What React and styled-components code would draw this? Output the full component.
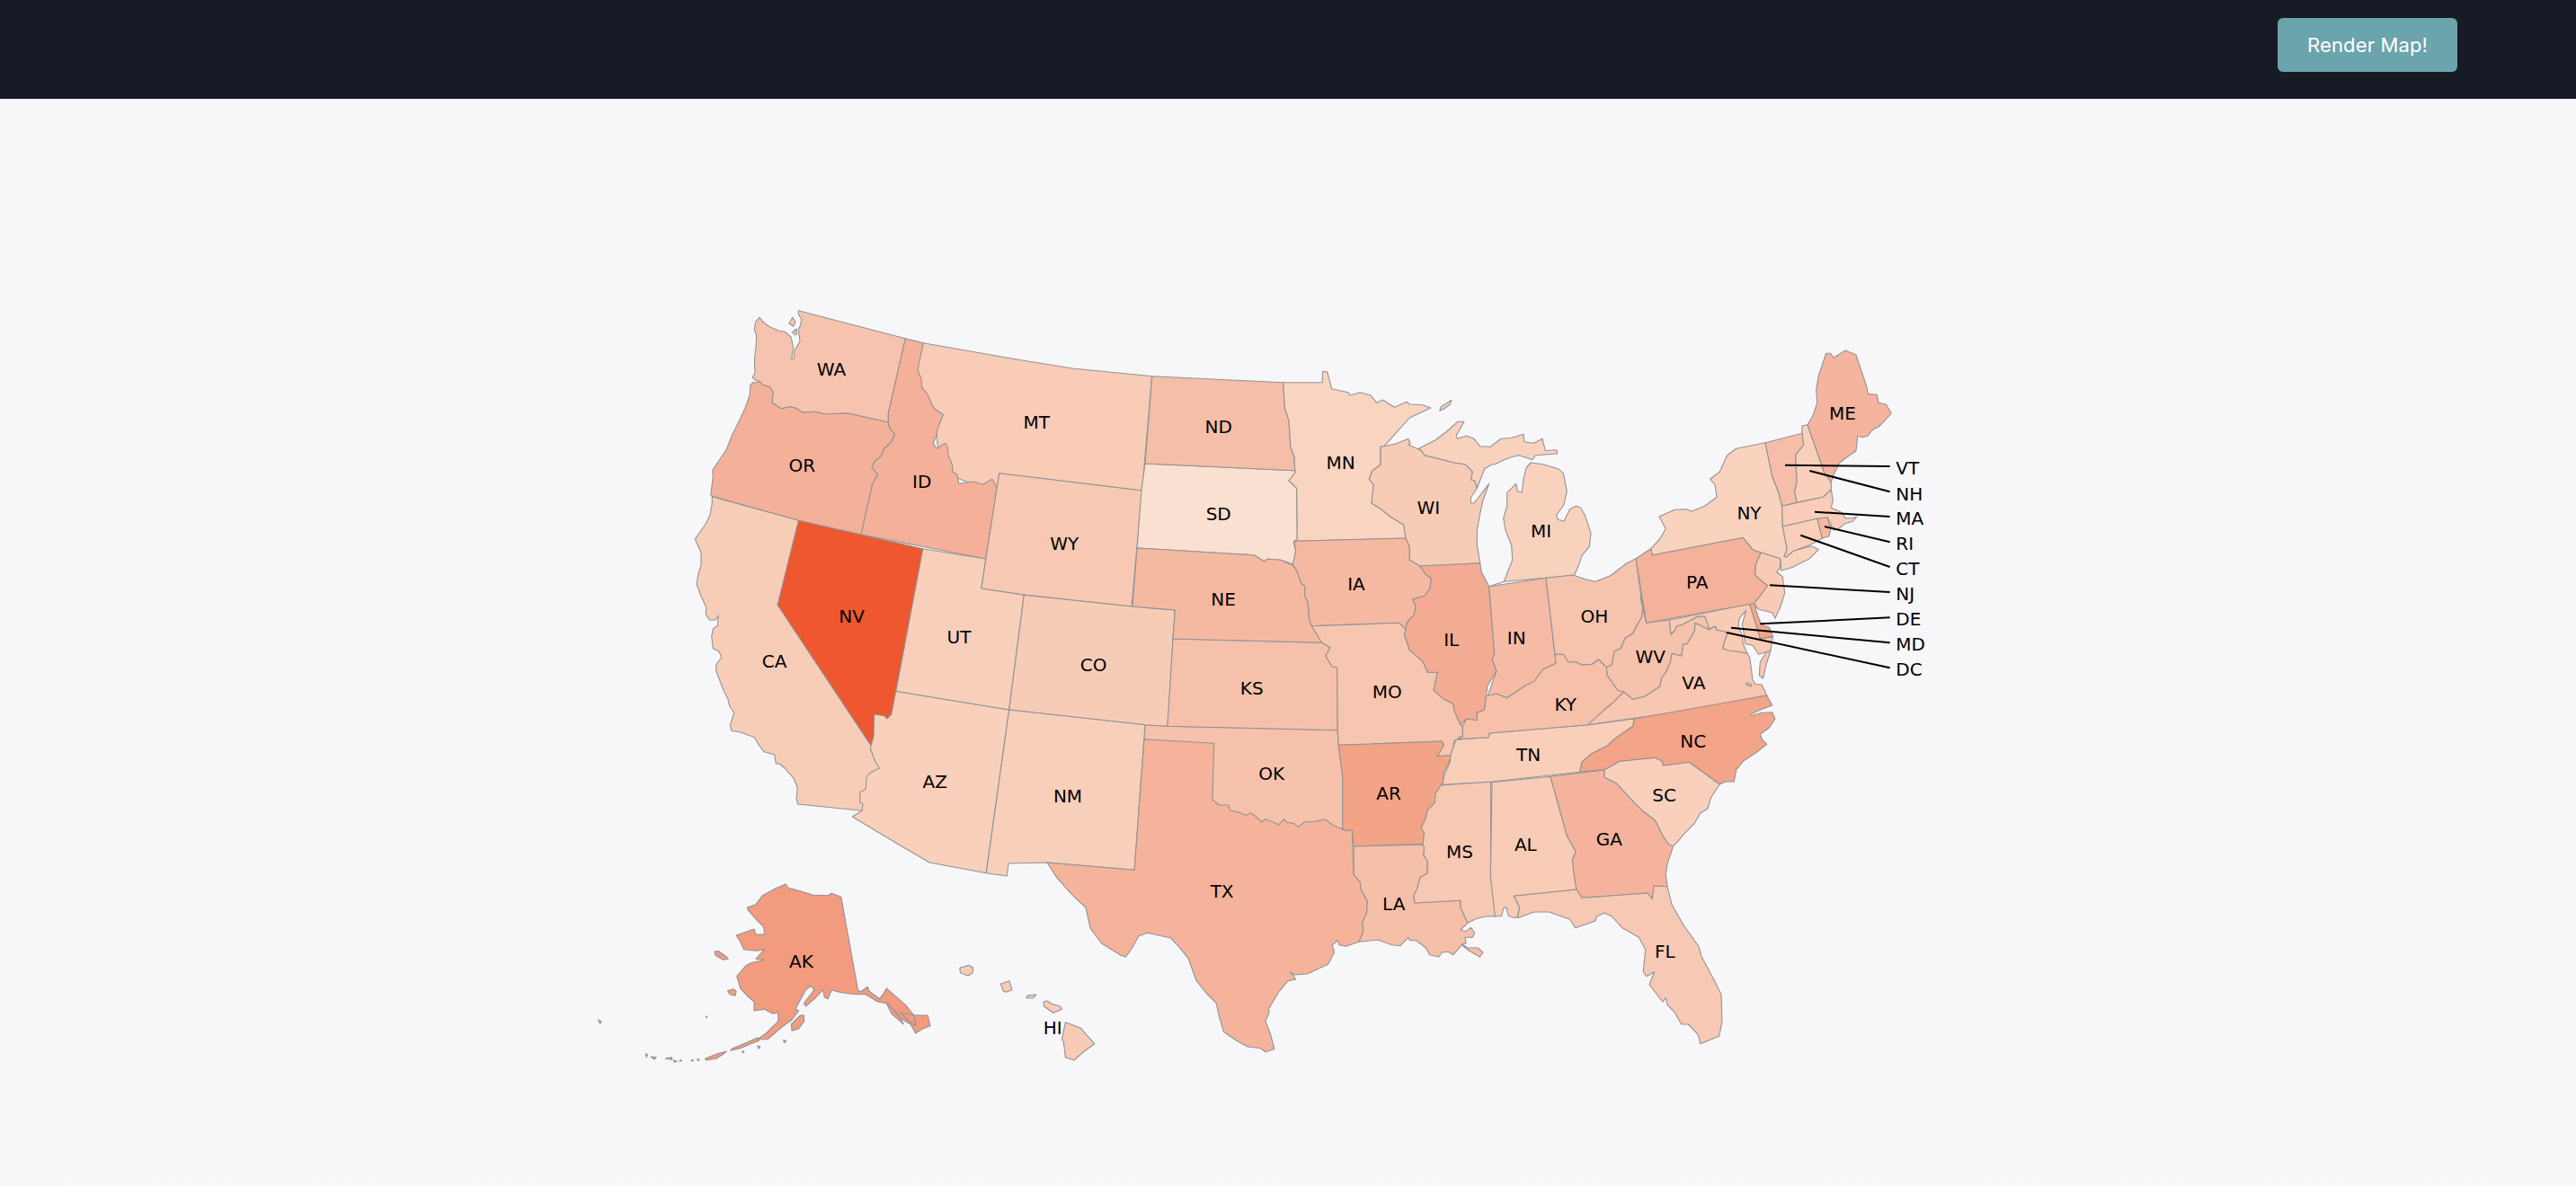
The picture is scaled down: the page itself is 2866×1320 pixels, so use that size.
import React from 'react';
import styled, { createGlobalStyle } from 'styled-components';

const GlobalStyle = createGlobalStyle`
    html, body {
        margin: 0;
        padding: 0;
        background: #f7f7fa;
    }
`;

// traced points are noted per region of the page, then moved to page coordinates
const region = (ox, oy, sx = 3) => (s) =>
    s
        .trim()
        .split(/\s+/)
        .map((p) => {
            const [x, y] = p.split(',').map(Number);
            return `${(ox + x / sx).toFixed(1)},${(oy + y / 3).toFixed(1)}`;
        })
        .join(' ');

const A = region(760, 330);
const B = region(760, 540);
const C = region(1260, 380);
const D = region(1700, 370);
const E = region(1800, 620);
const F = region(1140, 780, 2.8);
const G = region(1600, 740);
const H = region(640, 960, 1568 / 600);

const shapes = [
    // these three lie partly under their neighbours
    ['MT', '#f8ccb7', A('802,155 1100,208 1300,240 1565,266 1532,648 1055,590 1048,638 1000,640 900,600 850,500 840,400 770,240')],
    ['AZ', '#f8d0bb', [B('710,688 1088,750 1025,1200'), H('1195,35 1030,0'), B('720,1200 565,1107 597,1087 585,1050 600,960 610,860 600,760 680,700')].join(' ')],
    ['OK', '#f6c2ab', F('375,80 445,85 975,98 978,150 990,250 990,425 960,440 850,450 600,380 590,360 570,320 575,150 372,128')],

    ['WA', '#f6c4ae', A('385,47 742,140 685,390 685,420 550,390 470,392 440,385 400,388 375,372 355,368 328,375 297,355 300,320 290,302 265,295 258,285 240,278 232,270 240,255 238,210 243,170 245,130 238,110 242,85 255,70 270,88 290,102 320,115 340,118 360,135 368,170 362,208 370,208 372,180 390,150 385,110 392,95 395,75 385,60')],
    ['WA', '#f6c4ae', A('354,90 365,70 375,85 368,100')],
    ['WA', '#f6c4ae', A('365,120 378,108 380,125 372,128')],
    ['OR', '#f4b199', A('232,288 258,285 265,295 290,302 300,320 297,355 328,375 355,368 375,372 400,388 440,385 470,392 550,390 685,420 690,440 707,460 695,485 670,510 660,535 640,550 630,570 650,595 632,625 594,795 385,748 92,665 100,600 98,580 125,540 145,510 165,460 190,410 210,365 222,330 225,295')],
    ['ID', '#f4b099', A('742,140 802,155 783,245 795,275 797,305 815,325 835,370 868,395 850,440 845,465 835,490 847,508 875,490 882,500 885,530 898,560 900,585 915,595 920,625 970,618 1000,628 1032,610 1048,638 1010,876 594,795 632,625 650,595 630,570 640,550 660,535 670,510 695,485 707,460 690,440 685,420 685,390')],
    ['WY', '#f7c9b4', A('1055,590 1532,648 1497,1035 1138,996 995,975')],
    ['UT', '#f8cfbb', B('800,212 1010,246 995,345 1138,367 1088,750 710,688')],
    ['CO', '#f7ccb7', [B('1138,367 1497,405'), C('0,885 142,897 135,993 123,1200'), F('445,85 375,80'), B('1088,750')].join(' ')],
    ['NM', '#f8cfbb', [B('1088,750'), F('375,80 372,128 342,565 70,540'), H('1260,3 1255,45 1195,35'), B('1025,1200')].join(' ')],
    ['NV', '#ee5730', B('385,118 800,212 710,688 695,765 680,780 672,770 638,765 636,840 627,870 315,400')],
    ['CA', '#f8cdb8', B('97,38 385,118 315,400 627,870 625,880 640,920 655,945 625,960 612,975 610,1015 590,1025 590,1058 600,1065 597,1087 383,1065 378,1048 382,1010 370,980 340,945 322,930 310,930 305,900 270,890 255,870 238,842 195,826 162,820 157,802 170,760 155,738 150,715 135,685 110,620 110,600 128,575 120,555 100,545 95,505 100,480 115,470 118,435 108,450 88,450 75,430 78,410 60,370 45,330 50,300 60,265 60,225 40,180 75,130 90,100 97,60')],
    ['TX', '#f5b39c', F('372,128 590,142 585,330 605,348 635,348 640,365 665,372 690,382 705,375 722,388 738,405 750,395 782,408 790,415 808,395 815,405 840,410 853,422 870,405 905,403 935,395 960,415 995,432 1020,432 1025,580 1045,605 1048,630 1068,670 1065,710 1052,740 1055,770 1042,805 1000,820 980,815 975,800 958,815 965,840 945,880 880,912 840,915 828,905 845,930 820,935 790,975 760,1030 762,1040 750,1070 765,1110 778,1163 750,1172 735,1160 695,1155 660,1135 620,1105 605,1050 597,1010 565,975 535,935 510,860 480,820 455,792 382,775 355,785 335,825 315,855 300,850 240,810 205,760 190,690 150,650 100,590 70,540 342,565')],
    ['KS', '#f6c1aa', [C('135,993 632,1006 660,1022 645,1050 665,1085 683,1090'), F('975,98 445,85')].join(' ')],
    ['SD', '#fae0d0', C('42,408 542,431 545,435 522,465 548,490 550,660 538,670 545,700 538,745 495,730 450,727 440,735 405,713 15,690 30,495')],
    ['ND', '#f5bea8', C('65,116 503,137 508,220 522,265 528,355 540,385 542,431 42,408')],
    ['NE', '#f5b9a2', C('15,690 405,713 440,735 450,727 495,730 535,748 548,765 565,810 575,815 575,850 585,870 590,930 598,950 632,1006 135,993 142,897 0,885')],
    ['MN', '#f9d5c1', C('503,137 633,137 635,100 650,102 665,158 720,170 725,180 760,170 795,180 815,205 835,195 862,212 875,220 915,202 925,210 970,212 995,222 925,255 880,305 840,350 828,352 828,412 800,432 790,460 805,478 798,540 830,560 860,585 905,612 912,657 540,667 550,660 548,490 522,465 545,435 542,431 540,385 528,355 522,265 508,220')],
    ['IA', '#f5b9a2', C('540,667 912,657 925,685 925,730 960,750 980,780 997,790 993,825 975,850 935,860 945,885 940,912 915,940 912,962 890,940 598,950 590,930 585,870 575,850 575,815 565,810 548,765 535,745 545,700')],
    ['WI', '#f7ccb6', C('840,350 885,340 920,325 928,340 920,345 950,358 965,365 975,380 1075,405 1110,410 1135,435 1130,462 1142,465 1150,490 1130,520 1128,540 1140,540 1190,475 1170,530 1160,575 1150,630 1150,680 1160,740 960,750 925,730 925,685 912,657 905,612 860,585 830,560 798,540 805,478 790,460 800,432 828,412 828,352')],
    ['MI', '#f9d2bd', C('1190,818 1240,802 1380,790 1475,780 1490,745 1500,715 1525,685 1530,640 1510,580 1495,555 1480,550 1460,560 1440,600 1420,595 1415,580 1440,545 1450,500 1438,440 1420,425 1370,410 1330,405 1315,420 1305,460 1300,505 1285,500 1280,475 1250,505 1250,550 1238,590 1245,630 1265,680 1268,730 1240,802')],
    ['MI', '#f9d2bd', C('955,358 1010,330 1050,300 1085,268 1107,268 1080,315 1085,325 1115,315 1140,325 1160,350 1195,352 1230,325 1265,322 1305,310 1308,335 1340,340 1368,325 1378,365 1415,362 1418,375 1345,380 1335,395 1290,380 1270,385 1240,395 1210,410 1200,410 1175,425 1150,490 1142,465 1130,462 1135,435 1110,410 1075,405 975,380 965,365')],
    ['MI', '#f9d2bd', C('1025,232 1030,218 1065,196 1060,210 1040,225')],
    ['MO', '#f7c6b0', [C('598,950 890,940 912,962 908,980 925,1030 970,1070 985,1105 1018,1105 1005,1165'), G('20,115 50,130 55,155 75,200 82,205 82,240 70,240 65,250 55,252'), F('1330,182 1285,185 1305,148 1300,135 978,148 975,98'), C('683,1090 665,1085 645,1050 660,1022 632,1006')].join(' ')],
    ['IL', '#f3ab93', [C('960,750 1160,740 1165,770 1190,818 1208,1045 1200,1060 1215,1100 1185,1150'), G('160,105 155,150 130,160 130,185 95,180 75,200 55,155 50,130 20,115'), C('1005,1165 1018,1105 985,1105 970,1070 925,1030 908,980 915,940 940,912 945,885 935,860 975,850 993,825 997,790 980,780')].join(' ')],
    ['IN', '#f5bba5', [C('1190,818 1380,790 1410,1045 1413,1075 1370,1095 1345,1135 1310,1160'), G('290,70 260,90 230,110 195,97 165,105'), C('1215,1100 1200,1060 1208,1045')].join(' ')],
    ['OH', '#f6c3ad', D('60,820 150,810 195,825 225,832 275,812 330,770 360,755 378,885 385,905 380,950 365,975 350,1005 325,1020 310,1055 288,1065 280,1110 262,1118 235,1092 215,1108 180,1110 160,1100 135,1100 118,1075 90,1075')],
    ['AR', '#f4a486', F('978,148 1300,135 1305,150 1285,185 1330,182 1320,210 1305,240 1305,270 1297,282 1280,310 1278,340 1255,365 1250,390 1235,425 1245,440 1240,478 1025,486 1020,432 995,432 990,425 990,250')],
    ['LA', '#f6bfa8', F('1025,486 1240,480 1245,490 1243,515 1255,535 1255,575 1232,590 1222,630 1212,650 1215,675 1358,667 1358,690 1380,742 1358,765 1375,770 1390,757 1402,775 1395,790 1372,790 1375,810 1362,812 1380,825 1412,825 1428,840 1418,855 1385,835 1362,815 1345,835 1335,848 1320,838 1300,840 1290,855 1262,848 1250,825 1220,800 1200,800 1195,790 1170,818 1145,815 1100,798 1042,805 1055,770 1052,740 1065,710 1068,670 1048,630 1045,605 1025,580')],
    ['MS', '#f7c8b2', F('1297,282 1452,270 1452,580 1467,720 1435,720 1405,728 1380,742 1358,690 1358,667 1215,675 1212,650 1222,630 1232,590 1255,575 1255,535 1243,515 1245,490 1240,478 1245,440 1235,425 1250,390 1255,365 1278,340 1280,310')],
    ['AL', '#f8ccb6', G('178,392 375,373 430,570 460,625 448,650 455,710 462,750 253,772 272,810 265,840 255,845 235,838 228,810 218,812 212,838 190,840 175,705 180,400')],
    ['GA', '#f5b39d', G('375,373 555,350 555,375 595,395 650,455 680,485 725,520 750,570 770,600 785,605 765,665 760,700 765,740 720,738 715,782 700,762 480,778 462,750 455,710 448,650 460,625 430,570')],
    ['SC', '#f9d0bc', G('555,350 605,322 725,310 748,322 752,336 838,325 940,398 910,445 900,480 875,495 855,530 820,565 800,590 785,605 770,600 750,570 725,520 680,485 650,455 595,395 555,375')],
    ['FL', '#f7c8b3', G('253,772 462,750 480,778 700,762 715,782 720,738 765,740 780,800 820,870 870,940 880,975 925,1060 945,1100 948,1190 938,1240 875,1265 868,1235 835,1200 812,1200 790,1160 765,1135 760,1112 750,1125 705,1068 722,1025 695,1040 685,1025 692,950 670,910 615,878 580,840 555,828 530,840 525,855 458,878 440,850 370,825 320,825 265,845 272,810')],
    ['TN', '#f9cfba', G('60,250 168,242 172,228 500,200 655,180 650,205 592,245 565,270 510,298 480,325 473,358 180,390 15,400 20,370 40,325 42,300 55,262')],
    ['KY', '#f6c0a9', [G('65,248 82,240 82,205 95,180 130,185 130,160 155,150 160,105 195,97 230,110 260,90 290,70 320,55 350,15'), C('1413,1075 1410,1045'), D('118,1075 135,1100 160,1100 180,1110 215,1108 235,1092 262,1118'), G('565,35 600,85 620,90 580,130 555,150 540,185 500,200 172,228 168,242')].join(' ')],
    ['VA', '#f7c7b1', [E('360,250 365,258 355,285 350,305 375,310 400,315 432,322 440,335 445,370 450,410 460,425 480,425 497,462 300,500 150,525 58,538'), G('500,200 555,150 580,130 620,90 650,115 690,105 740,72'), E('145,405 160,385 175,350 180,322 212,330 218,290 230,290 255,248 258,220 305,242 325,230 330,243')].join(' ')],
    ['VA', '#f7c7b1', E('497,315 510,312 495,360 485,405 472,395 475,350')],
    ['VA', '#f7c7b1', E('430,420 445,425 445,432 428,425')],
    ['WV', '#f6c2ac', [D('378,885 385,905 380,950 365,975 350,1005 325,1020 310,1055 288,1065 280,1110 262,1118'), G('565,35 600,85 620,90 650,115 690,105 740,72'), E('145,405 160,385 175,350 180,322 212,330 218,290 230,290 255,248 258,220 305,242 303,225 290,198 265,198 245,210 215,225 195,232 190,245 177,258 172,210 95,220 75,135')].join(' ')],
    ['MD', '#f8cbb5', E('172,210 440,157 475,272 517,267 510,312 470,325 450,295 425,290 420,250 415,225 428,178 405,205 402,235 415,260 418,290 432,322 400,315 370,312 350,305 355,285 365,258 360,250 330,243 325,230 305,240 290,198 265,198 245,210 215,225 195,232 190,245 177,258')],
    ['DE', '#f5a68a', E('440,157 455,143 462,180 478,225 505,235 518,265 475,272')],
    ['NC', '#f4a488', [E('497,462 515,495 470,512 445,525 447,530 480,520 515,518 525,540 505,570 475,592 482,610 497,625 465,650 420,680 395,710 388,750 360,750 340,758'), G('838,325 752,336 748,322 725,310 605,322 555,350 473,358 480,325 510,298 565,270 592,245 650,205 655,180')].join(' ')],
    ['PA', '#f5b29b', D('360,755 410,722 415,743 718,685 750,725 778,735 760,775 758,810 780,830 800,845 775,880 755,905 735,908 395,970')],
    ['NY', '#f9d3be', D('410,722 440,690 460,655 438,615 490,592 530,590 545,598 590,580 630,550 625,510 608,490 640,465 665,410 695,388 792,368 815,480 835,530 848,580 850,648 865,725 855,748 862,750 885,730 940,715 950,715 970,725 940,755 880,785 845,795 842,755 778,735 750,725 718,685 415,743')],
    ['VT', '#f6bea8', D('792,368 915,337 920,375 893,410 898,500 890,530 897,567 848,580 835,530 815,480')],
    ['NH', '#f9d0bb', D('915,312 933,308 990,470 1012,500 1012,525 985,550 897,567 890,530 898,500 893,410 920,375 915,337')],
    ['ME', '#f5b49d', D('933,308 950,280 965,235 962,190 970,145 995,70 1010,70 1020,85 1060,60 1095,75 1130,180 1135,205 1165,208 1170,235 1195,240 1213,270 1190,295 1170,315 1150,325 1135,345 1115,350 1100,345 1095,395 1060,420 1040,435 1022,470 1012,500 990,470')],
    ['MA', '#f9cdb9', D('848,580 985,550 1012,525 1018,560 1012,585 1045,600 1060,620 1085,620 1098,615 1085,630 1055,640 1038,655 1020,660 1000,618 965,622 850,648')],
    ['RI', '#f6b8a0', D('965,622 1000,618 1005,640 1012,650 1005,680 982,688')],
    ['CT', '#f9cfbb', D('850,648 965,622 982,688 940,710 885,730 862,750 855,748 865,725')],
    ['NJ', '#f9cbb6', D('778,735 842,755 842,785 830,800 850,815 857,870 845,910 825,955 815,935 770,925 755,905 775,880 800,845 780,830 758,810 760,775')],

    ['AK', '#f29b7f', H('500,150 525,140 545,110 580,88 612,72 620,85 655,95 690,108 735,110 745,103 773,115 822,425 830,432 850,415 855,430 885,455 895,440 905,420 915,430 960,475 985,510 1025,510 1032,545 1010,555 990,570 975,540 945,520 925,490 905,470 880,465 845,440 820,440 790,437 765,432 745,425 735,455 725,450 720,425 700,450 670,480 665,470 695,425 685,412 670,425 640,490 650,495 630,525 600,550 560,590 530,590 555,570 590,530 590,500 575,505 550,490 520,495 520,465 505,450 480,420 470,380 495,345 510,335 550,325 525,322 550,290 525,295 490,290 480,265 468,243 520,222 525,240 550,240 548,215 530,195 502,158')],
    ['AK', '#f29b7f', H('905,470 925,490 945,520 955,540 945,530 920,505')],
    ['AK', '#f29b7f', H('945,500 985,510 990,545 970,530')],
    ['AK', '#f29b7f', H('405,298 415,295 440,315 445,322 430,325 408,310')],
    ['AK', '#f29b7f', H('443,428 460,422 468,430 465,445 450,440')],
    ['AK', '#f29b7f', H('628,540 655,510 665,510 665,530 650,555 630,562')],
    ['AK', '#f29b7f', H('530,585 490,605 455,622 452,628 480,620 510,605 535,595')],
    ['AK', '#f29b7f', H('378,655 410,640 440,630 430,640 410,655 380,660')],
    ['AK', '#f29b7f', H('205,638 210,642 207,650')],
    ['AK', '#f29b7f', H('220,648 236,650 230,657')],
    ['AK', '#f29b7f', H('262,655 280,650 282,658')],
    ['AK', '#f29b7f', H('286,660 296,664 288,667')],
    ['AK', '#f29b7f', H('304,660 310,660 305,664')],
    ['AK', '#f29b7f', H('338,659 344,660 340,664')],
    ['AK', '#f29b7f', H('354,657 361,657 358,662')],
    ['AK', '#f29b7f', H('67,525 76,530 72,538')],
    ['AK', '#f29b7f', H('380,513 384,515 381,518')],
    ['AK', '#f29b7f', H('605,594 613,594 609,602')],
    ['AK', '#f29b7f', H('485,630 491,630 488,636')],
    ['AK', '#f29b7f', H('530,612 538,615 534,622')],

    ['HI', '#f8cbb5', H('1118,352 1145,343 1157,352 1155,368 1142,378 1120,368')],
    ['HI', '#f8cbb5', H('1237,405 1262,395 1270,425 1252,433 1245,430')],
    ['HI', '#f8cbb5', H('1315,443 1340,441 1332,452 1312,452')],
    ['HI', '#f8cbb5', H('1362,465 1372,462 1385,472 1410,480 1415,490 1390,502 1375,490 1363,480')],
    ['HI', '#f8cbb5', H('1425,533 1470,553 1490,580 1510,605 1480,630 1450,660 1425,650 1420,600 1415,590')],
];

const labels = [
    ['WA', A('495,265')], ['MT', A('1180,440')], ['OR', A('397,585')], ['ID', A('797,638')],
    ['WY', A('1273,845')], ['NV', B('563,458')], ['UT', B('921,527')], ['CA', B('305,610')],
    ['CO', B('1370,620')], ['AZ', B('841,1012')], ['NM', B('1284,1060')], ['ND', C('287,305')],
    ['MN', C('695,425')], ['SD', C('287,597')], ['WI', C('988,575')], ['MI', C('1364,655')],
    ['IA', C('747,830')], ['NE', C('303,882')], ['IL', C('1064,1017')], ['IN', C('1282,1010')],
    ['KS', C('398,1180')], ['MO', C('850,1190')], ['OH', D('222,970')], ['PA', D('565,855')],
    ['NY', D('738,625')], ['ME', D('1050,290')], ['WV', D('409,1105')], ['VA', D('553,1190')],
    ['KY', G('425,152')], ['TN', G('302,322')], ['NC', G('851,275')], ['SC', G('755,455')],
    ['GA', G('571,604')], ['AL', G('292,622')], ['MS', G('72,646')], ['FL', G('757,977')],
    ['LA', F('1150,698')], ['OK', F('769,265')], ['TX', F('615,658')], ['AR', F('1134,330')],
    ['AK', H('657,350')], ['HI', H('1388,573')],
];

const callouts = [
    ['VT', D('858,443 1208,447'), D('1228,475')],
    ['NH', D('940,462 1208,532'), D('1228,560')],
    ['MA', D('957,599 1208,615'), D('1228,643')],
    ['RI', D('990,648 1208,700'), D('1228,727')],
    ['CT', D('910,677 1208,783'), D('1228,810')],
    ['NJ', D('807,844 1208,867'), D('1228,895')],
    ['DE', D('775,973 1208,952'), D('1228,978')],
    ['MD', D('678,986 1208,1036'), D('1228,1063')],
    ['DC', D('663,1002 1208,1120'), D('1228,1147')],
];

function App() {
    const renderShapes = () =>
        shapes.map(([id, fill, points], index) => (
            <StateShape key={`${id}-${index}`} $fill={fill} points={points} />
        ));

    const renderLabels = () =>
        labels.map(([id, at]) => {
            const [x, y] = at.split(',');
            return (
                <StateLabel key={id} x={x} y={y}>
                    {id}
                </StateLabel>
            );
        });

    const renderCallouts = () =>
        callouts.map(([id, line, at]) => {
            const [x, y] = at.split(',');
            return (
                <g key={id}>
                    <Leader points={line} />
                    <CalloutLabel x={x} y={y}>
                        {id}
                    </CalloutLabel>
                </g>
            );
        });

    return (
        <>
            <GlobalStyle />
            <Page>
                <TopBar>
                    <RenderButton>Render Map!</RenderButton>
                </TopBar>
                <MapArea>
                    <MapSvg viewBox="0 110 2866 1184">
                        {renderShapes()}
                        {renderCallouts()}
                        {renderLabels()}
                    </MapSvg>
                </MapArea>
                <BottomBand />
            </Page>
        </>
    );
}

const Page = styled.div`
    width: 2866px;
    height: 1320px;
    overflow: hidden;
    display: flex;
    flex-direction: column;
    background: #f7f7fa;
`;

const TopBar = styled.header`
    height: 110px;
    flex-shrink: 0;
    display: flex;
    align-items: flex-start;
    justify-content: flex-end;
    padding: 20px 132px 0 0;
    box-sizing: border-box;
    background: #161b26;
`;

const RenderButton = styled.button`
    width: 200px;
    height: 60px;
    border: none;
    border-radius: 6px;
    background: #6ba4ad;
    color: #ffffff;
    font-family: Inter, "Liberation Sans", sans-serif;
    font-size: 22px;
    font-weight: 400;
    letter-spacing: 0.15px;
    cursor: pointer;
`;

const MapArea = styled.main`
    flex: 1;
    min-height: 0;
`;

const MapSvg = styled.svg`
    display: block;
    width: 2866px;
    height: 1184px;
`;

const BottomBand = styled.div`
    height: 26px;
    flex-shrink: 0;
    margin-left: 70px;
    background: linear-gradient(#f7f7fa, #f9f9fb);
`;

const StateShape = styled.polygon`
    fill: ${(props) => props.$fill};
    stroke: #929292;
    stroke-width: 1.1;
    stroke-linejoin: round;
`;

const StateLabel = styled.text`
    font-family: "DejaVu Sans", sans-serif;
    font-size: 20px;
    fill: #000000;
    text-anchor: middle;
`;

const CalloutLabel = styled(StateLabel)`
    text-anchor: start;
`;

const Leader = styled.polyline`
    fill: none;
    stroke: #000000;
    stroke-width: 2;
`;

export default App;
